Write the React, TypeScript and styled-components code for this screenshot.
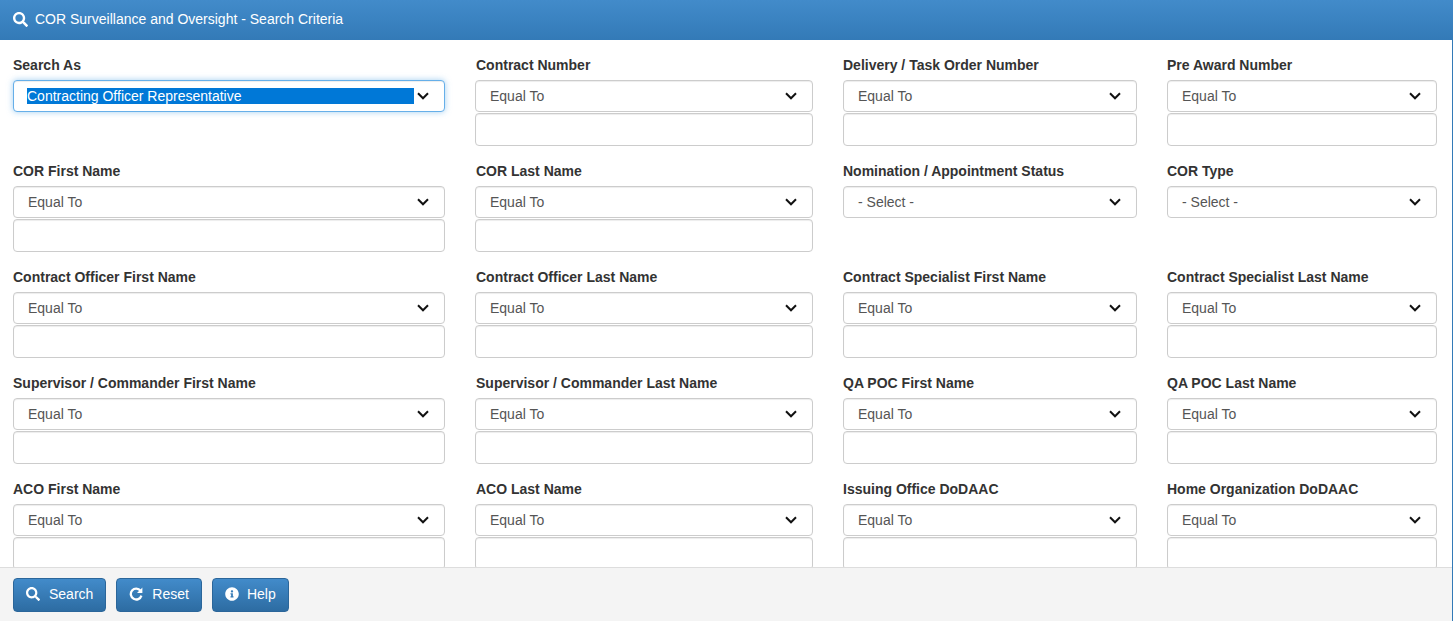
import styled, { createGlobalStyle } from 'styled-components';
import { FaSearch, FaInfoCircle } from 'react-icons/fa';

const GlobalStyle = createGlobalStyle`
  html, body {
    margin: 0;
    padding: 0;
    background: #fff;
    overflow: hidden;
  }
  * {
    box-sizing: border-box;
  }
`;

const StyledPage = styled.div`
  display: flex;
  flex-direction: column;
  height: 629px;
  width: 1453px;
  padding-bottom: 8px;
  font-family: 'Liberation Sans', Arial, sans-serif;
  font-size: 14px;
  color: #333;
`;

const StyledPanel = styled.div`
  display: flex;
  flex-direction: column;
  flex: 1;
  min-height: 0;
  border-right: 1px solid #337ab7;
`;

const StyledHeader = styled.div`
  display: flex;
  align-items: center;
  flex: 0 0 40px;
  gap: 7px;
  margin-right: -1px;
  padding: 0 13px 2px;
  background: linear-gradient(to bottom, #428bca 0%, #337ab7 100%);
  color: #fff;
  font-size: 14px;
`;

const StyledLabel = styled.div`
  height: 25px;
  padding-top: 1px;
  font-weight: bold;
  line-height: 18px;
`;

const StyledField = styled.div`
  display: flex;
  flex-direction: column;
`;

const StyledCriteria = styled.div`
  display: grid;
  grid-template-columns: 432px 338px 294px 270px;
  grid-auto-rows: 106px;
  column-gap: 30px;
  align-content: start;
  flex: 1;
  min-height: 0;
  overflow: hidden;
  padding: 15px 0 0 13px;

  ${StyledField}:nth-child(4n + 2) ${StyledLabel} {
    padding-left: 1px;
  }
`;

const StyledSelect = styled.div<{ $focused?: boolean }>`
  display: flex;
  align-items: center;
  justify-content: space-between;
  height: 32px;
  padding: 0 15px 0 ${({ $focused }) => ($focused ? '13px' : '14px')};
  background: #fff;
  border: 1px solid ${({ $focused }) => ($focused ? '#66afe9' : '#ccc')};
  border-radius: 4px;
  box-shadow: ${({ $focused }) =>
    $focused
      ? 'inset 0 1px 1px rgba(0,0,0,.075), 0 0 6px rgba(102,175,233,.6)'
      : 'inset 0 1px 1px rgba(0,0,0,.075)'};
  color: #555;
`;

const StyledSelectedText = styled.span`
  flex: 1;
  margin-right: 3px;
  background: #0078d7;
  color: #fff;
  line-height: 16px;
`;

const StyledInput = styled.input`
  display: block;
  width: 100%;
  height: 33px;
  margin-top: 1px;
  flex-shrink: 0;
  background: #fff;
  border: 1px solid #ccc;
  border-radius: 4px;
  box-shadow: inset 0 1px 1px rgba(0, 0, 0, 0.075);
  outline: none;
`;

const StyledFooter = styled.div`
  display: flex;
  align-items: flex-start;
  flex: 0 0 54px;
  gap: 10px;
  padding: 10px 13px 0;
  background: #f4f4f4;
  border-top: 1px solid #ddd;
`;

const StyledButton = styled.button<{ $gap?: number }>`
  display: flex;
  align-items: center;
  gap: ${({ $gap }) => $gap ?? 9}px;
  height: 34px;
  padding: 0 12px 2px;
  background: linear-gradient(to bottom, #428bca 0%, #2d6ca2 100%);
  border: 1px solid #2b669a;
  border-radius: 4px;
  color: #fff;
  font-family: inherit;
  font-size: 14px;
`;

const Chevron = () => (
  <svg width="12" height="8" viewBox="0 0 12 8" fill="none">
    <path d="M1 1.3 6 6.3l5-5" stroke="#111" strokeWidth="2" />
  </svg>
);

const RepeatIcon = () => (
  <svg width="14" height="14" viewBox="0 0 14 14" fill="none">
    <path d="M11.5 3.8A5.4 5.4 0 1 0 12.4 8.6" stroke="#fff" strokeWidth="2.3" />
    <path d="M13.4 0.6v5.4H8z" fill="#fff" />
  </svg>
);

type Field = { label: string; blank?: boolean };

const rows: Field[] = [
  { label: 'Contract Number' },
  { label: 'Delivery / Task Order Number' },
  { label: 'Pre Award Number' },
  { label: 'COR First Name' },
  { label: 'COR Last Name' },
  { label: 'Nomination / Appointment Status', blank: true },
  { label: 'COR Type', blank: true },
  { label: 'Contract Officer First Name' },
  { label: 'Contract Officer Last Name' },
  { label: 'Contract Specialist First Name' },
  { label: 'Contract Specialist Last Name' },
  { label: 'Supervisor / Commander First Name' },
  { label: 'Supervisor / Commander Last Name' },
  { label: 'QA POC First Name' },
  { label: 'QA POC Last Name' },
  { label: 'ACO First Name' },
  { label: 'ACO Last Name' },
  { label: 'Issuing Office DoDAAC' },
  { label: 'Home Organization DoDAAC' },
];

const App = () => {
  const fieldList = rows.map((i) => (
    <StyledField key={i.label}>
      <StyledLabel>{i.label}</StyledLabel>
      <StyledSelect>
        {i.blank ? '- Select -' : 'Equal To'}
        <Chevron />
      </StyledSelect>
      {!i.blank && <StyledInput />}
    </StyledField>
  ));

  return (
    <>
      <GlobalStyle />
      <StyledPage>
        <StyledPanel>
          <StyledHeader>
            <FaSearch size={15} />
            COR Surveillance and Oversight - Search Criteria
          </StyledHeader>
          <StyledCriteria>
            <StyledField>
              <StyledLabel>Search As</StyledLabel>
              <StyledSelect $focused>
                <StyledSelectedText>Contracting Officer Representative</StyledSelectedText>
                <Chevron />
              </StyledSelect>
            </StyledField>
            {fieldList}
          </StyledCriteria>
          <StyledFooter>
            <StyledButton>
              <FaSearch size={14} />
              Search
            </StyledButton>
            <StyledButton>
              <RepeatIcon />
              Reset
            </StyledButton>
            <StyledButton $gap={8}>
              <FaInfoCircle size={14} />
              Help
            </StyledButton>
          </StyledFooter>
        </StyledPanel>
      </StyledPage>
    </>
  );
};

export default App;
